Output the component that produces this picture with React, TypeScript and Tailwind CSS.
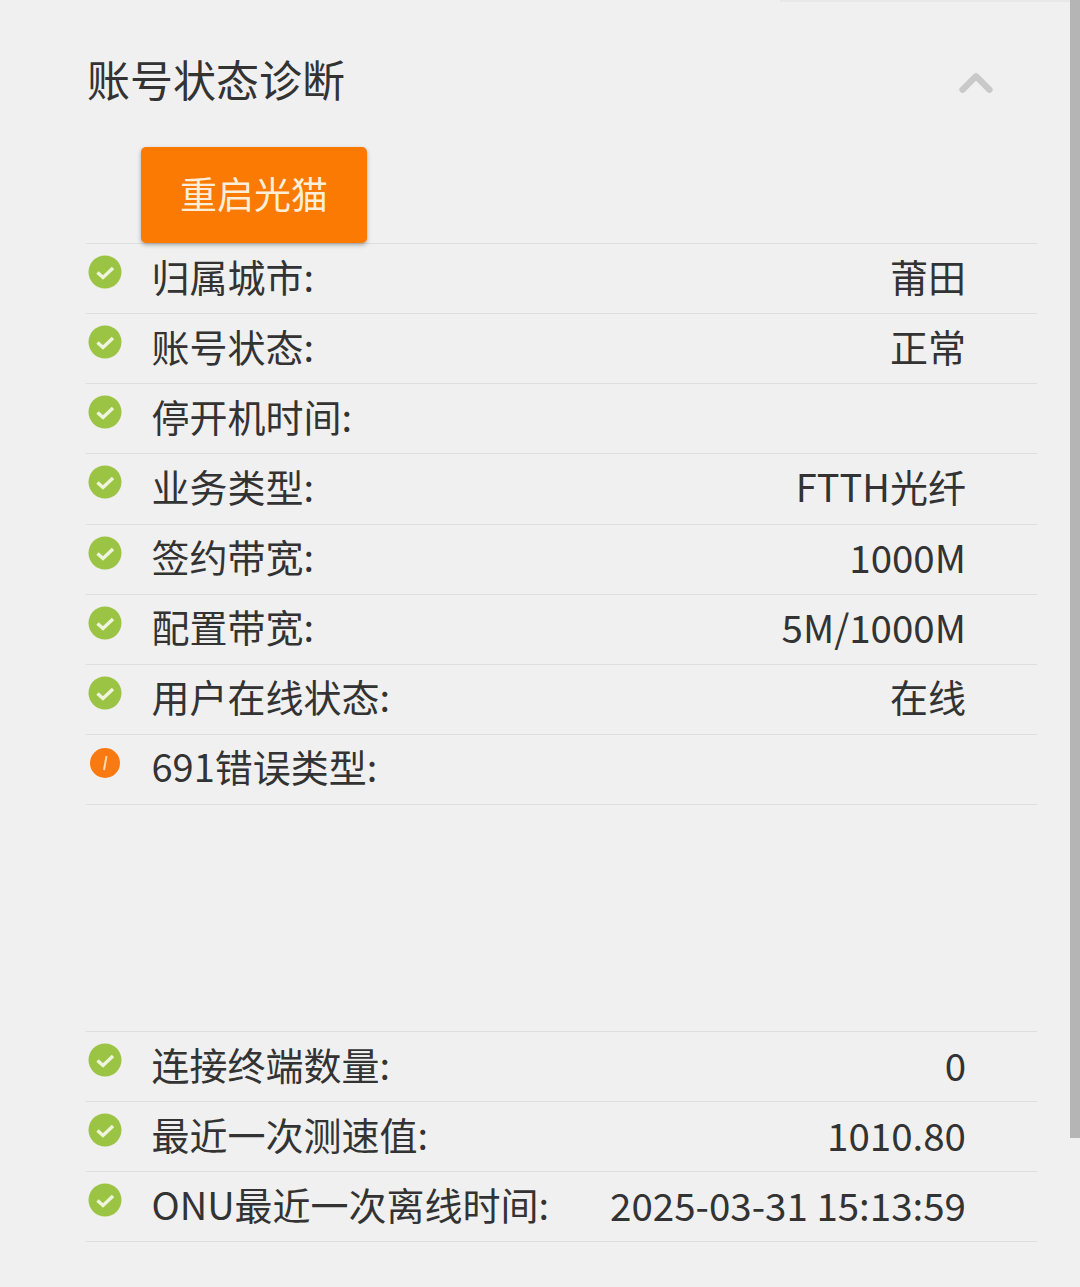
import { ChevronUp } from "lucide-react";

type Row = { label: string; value?: string; numeric?: boolean; warn?: boolean };

const firstRows: Row[] = [
  { label: "归属城市:", value: "莆田" },
  { label: "账号状态:", value: "正常" },
  { label: "停开机时间:" },
  { label: "业务类型:", value: "FTTH光纤" },
  { label: "签约带宽:", value: "1000M", numeric: true },
  { label: "配置带宽:", value: "5M/1000M", numeric: true },
  { label: "用户在线状态:", value: "在线" },
  { label: "691错误类型:", warn: true },
];

const secondRows: Row[] = [
  { label: "连接终端数量:", value: "0", numeric: true },
  { label: "最近一次测速值:", value: "1010.80", numeric: true },
  { label: "ONU最近一次离线时间:", value: "2025-03-31 15:13:59", numeric: true },
];

function CheckIcon() {
  return (
    <svg viewBox="0 0 34 34" className="h-[34px] w-[34px]">
      <circle cx="17" cy="17" r="16.5" fill="#9cc444" />
      <path d="M9.5 17.5l5.5 5 10-9.5" fill="none" stroke="#eef5dc" strokeWidth="3.4" />
    </svg>
  );
}

function WarnIcon() {
  return (
    <svg viewBox="0 0 34 34" className="h-[34px] w-[34px]">
      <circle cx="17" cy="17" r="15" fill="#f97a10" />
      <path d="M18.5 10l-2.5 14" fill="none" stroke="#fbd9b0" strokeWidth="2" />
    </svg>
  );
}

function StatusRow({ row }: { row: Row }) {
  return (
    <div className="flex h-[70.125px] border-b border-[#dedede] pr-[71px]">
      <div className="w-[66px] shrink-0 pl-[2px] pt-[11px]">{row.warn ? <WarnIcon /> : <CheckIcon />}</div>
      <div className="flex flex-1 items-center justify-between pb-[6px] text-[38px] leading-[50px] text-[#333333]">
        <span className="-ml-[0.5px]">{row.label}</span>
        {row.numeric ? <span className="text-[38.5px]">{row.value}</span> : <span>{row.value}</span>}
      </div>
    </div>
  );
}

export default function App() {
  return (
    <div
      className="flex h-[1287px] w-[1080px] overflow-hidden bg-[#f0f0f0]"
      style={{ fontFamily: '"Noto Sans CJK SC", sans-serif' }}
    >
      <div className="w-[1070px] shrink-0">
        <div className="ml-[780px] h-[2px] bg-[#e8e8e8]" />
        <div className="pl-[86px] pr-[33px]">
          {/* Header */}
          <div className="flex h-[145px] items-start justify-between pr-[34px] pt-[48px]">
            <h1 className="pl-[1px] text-[43px] leading-[56px] font-normal text-[#333333]">账号状态诊断</h1>
            <ChevronUp className="mt-[6px] h-[54px] w-[54px] text-[#c9c9c9]" strokeWidth={2.8} />
          </div>

          {/* Restart button */}
          <div className="relative z-10 pl-[55px]">
            <button className="flex h-[96px] w-[226px] items-center justify-center rounded-[5px] bg-[#fb7a04] pb-[2px] text-[37px] text-[#fdeed9] shadow-[0_2px_4px_rgba(0,0,0,0.3)]">
              重启光猫
            </button>
          </div>

          {/* Diagnostic rows */}
          <div className="border-t border-[#dedede]">
            {firstRows.map((row) => (
              <StatusRow key={row.label} row={row} />
            ))}
          </div>

          <div className="mt-[226px] border-t border-[#dedede]">
            {secondRows.map((row) => (
              <StatusRow key={row.label} row={row} />
            ))}
          </div>
        </div>
      </div>

      {/* Scrollbar */}
      <div className="h-[1138px] w-[10px] shrink-0 bg-[#b5b5b5]" />
    </div>
  );
}
